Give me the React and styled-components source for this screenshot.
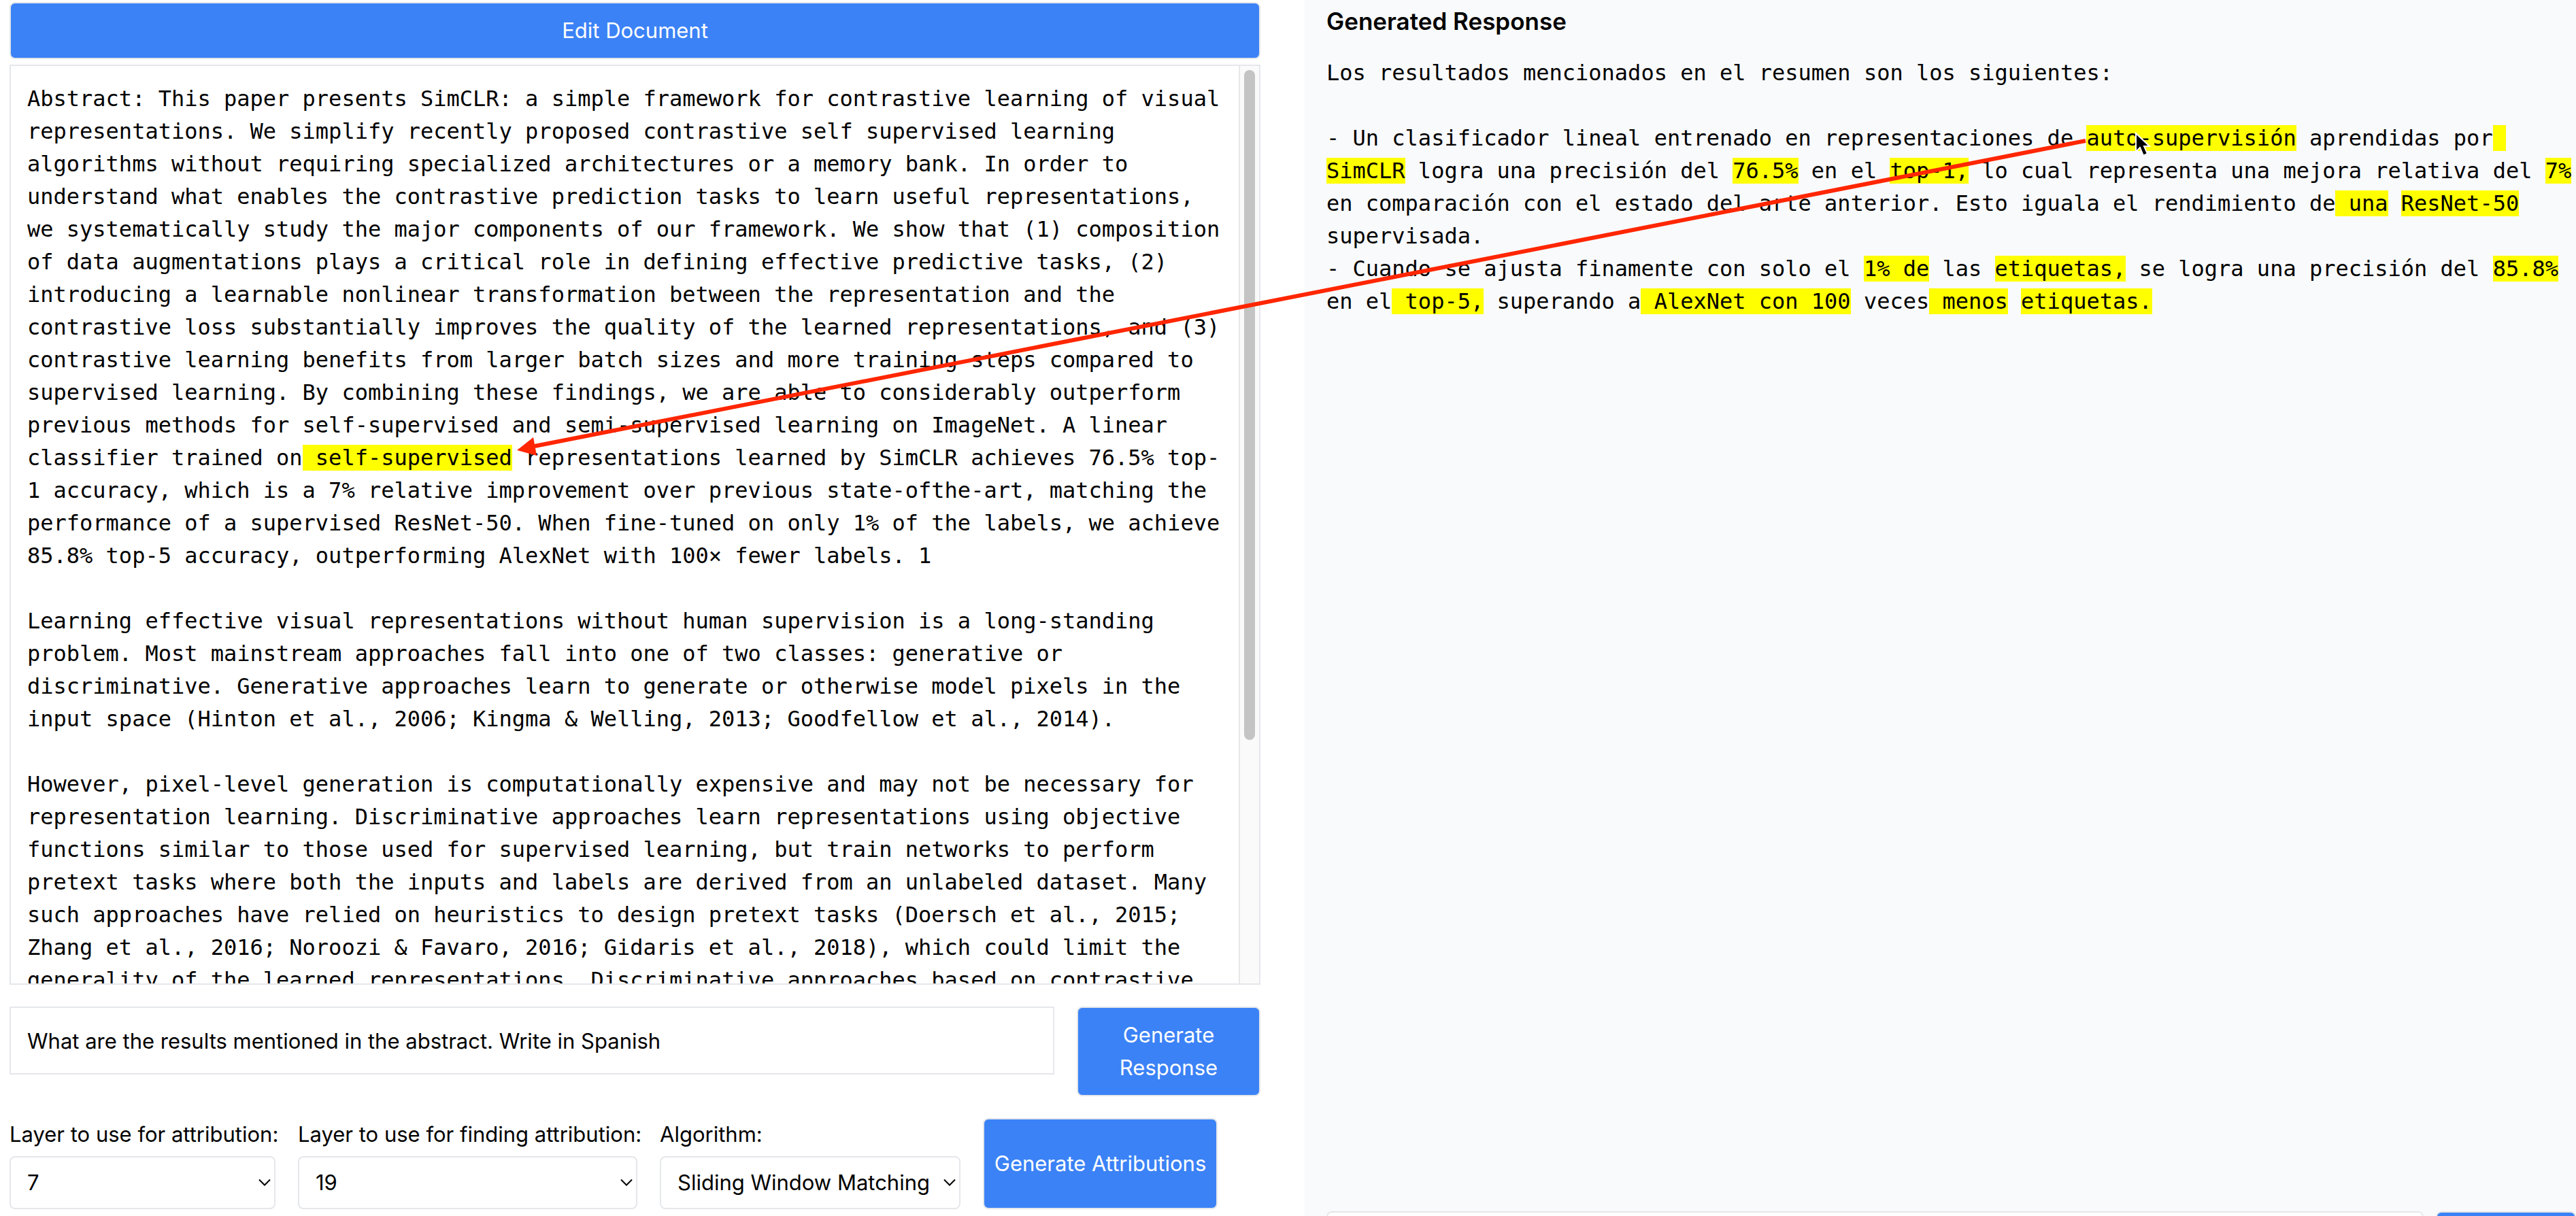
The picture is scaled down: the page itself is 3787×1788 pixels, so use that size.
import React from "react";
import styled, { createGlobalStyle } from "styled-components";

const sans = `Inter, "Liberation Sans", sans-serif`;
const mono = `"DejaVu Sans Mono", "Liberation Mono", monospace`;
const line = "#e5e7eb";
const blue = "#3b82f6";

const GlobalStyle = createGlobalStyle`
  *, *::before, *::after { box-sizing: border-box; }
  body {
    margin: 0;
    overflow: hidden;
    background: #fff;
    color: #000;
    font-family: ${sans};
    font-size: 31px;
    line-height: 48px;
  }
  button, input, select { font: inherit; color: inherit; margin: 0; }
`;

const Page = styled.div`
  position: relative;
  display: grid;
  grid-template-columns: 1918fr 1869fr;
  grid-template-rows: minmax(0, 1fr);
  height: 100vh;
  overflow: hidden;
`;

const Workspace = styled.main`
  display: flex;
  flex-direction: column;
  gap: 32px;
  min-width: 0;
  min-height: 0;
  padding: 3px 65px 10px 14px;
`;

const DocumentSection = styled.section`
  flex: 1;
  display: flex;
  flex-direction: column;
  gap: 8px;
  min-height: 0;
`;

const Button = styled.button`
  flex: ${(p) => p.$basis || "none"};
  padding: 16px 12px;
  border: 2px solid ${line};
  border-radius: 8px;
  background: ${blue};
  color: #fff;
  text-align: center;
`;

const DocumentBox = styled.div`
  flex: 1;
  display: flex;
  min-height: 0;
  border: 2px solid ${line};
  overflow: hidden;
`;

const DocumentText = styled.div`
  flex: 1;
  padding: 24px;
  font-family: ${mono};
  font-size: 32px;
  white-space: pre-wrap;
`;

const ScrollTrack = styled.div`
  flex: none;
  width: 30px;
  padding: 6px;
  border-left: 2px solid #e8e8e8;
  background: #fafafa;
`;

const ScrollThumb = styled.div`
  height: 73.7%;
  border-radius: 8px;
  background: #c4c4c4;
`;

const PromptRow = styled.form`
  display: flex;
  align-items: flex-start;
  gap: 33px;
`;

const PromptInput = styled.input`
  flex: 1;
  min-width: 0;
  height: 100px;
  padding: 0 24px;
  border: 2px solid ${line};
  background: #fff;
`;

const SettingsRow = styled.div`
  display: flex;
  align-items: stretch;
  gap: 33px;
`;

const Field = styled.label`
  display: flex;
  flex-direction: column;
  gap: 8px;
  width: ${(p) => p.$width}px;
  white-space: nowrap;
`;

const SelectWrap = styled.span`
  position: relative;
  display: block;
`;

const Select = styled.select`
  appearance: none;
  display: block;
  width: 100%;
  height: 78px;
  padding: 0 24px;
  border: 2px solid ${line};
  border-radius: 8px;
  background: #fff;
`;

const Chevron = styled.svg`
  position: absolute;
  right: 7px;
  top: 50%;
  width: 18px;
  height: 12px;
  margin-top: -6px;
  pointer-events: none;
`;

const ResponsePanel = styled.aside`
  min-width: 0;
  padding: 3px 0 0 32px;
  background: #f9fafc;
`;

const ResponseBody = styled.section`
  height: calc(100vh - 10px);
`;

const Heading = styled.h2`
  margin: 0 0 24px;
  font-size: 35px;
  font-weight: 600;
  line-height: 56px;
`;

const ResponseText = styled.div`
  font-family: ${mono};
  font-size: 32px;
  white-space: pre-wrap;
`;

const Mark = styled.mark`
  background: #ff0;
  color: inherit;
`;

const ReplyRow = styled.form`
  display: flex;
  gap: 18px;
`;

const ReplyInput = styled.input`
  flex: 1;
  min-width: 0;
  height: 84px;
  padding: 0 24px;
  border: 2px solid ${line};
  border-radius: 8px;
  background: #fff;
`;

const Annotation = styled.svg`
  position: absolute;
  inset: 0;
  width: 100%;
  height: 100%;
  pointer-events: none;
`;

function SelectField({ label, value, width }) {
  return (
    <Field $width={width}>
      {label}
      <SelectWrap>
        <Select defaultValue={value}>
          <option>{value}</option>
        </Select>
        <Chevron viewBox="0 0 18 12" fill="none" stroke="#000" strokeWidth="2">
          <path d="M1 1.5 L9 9.5 L17 1.5" />
        </Chevron>
      </SelectWrap>
    </Field>
  );
}

export default function App() {
  return (
    <>
      <GlobalStyle />
      <Page>
        <Workspace>
          <DocumentSection>
            <Button type="button">Edit Document</Button>
            <DocumentBox>
              <DocumentText>
                {"Abstract: This paper presents SimCLR: a simple framework for contrastive learning of visual representations. We simplify recently proposed contrastive self supervised learning algorithms without requiring specialized architectures or a memory bank. In order to understand what enables the contrastive prediction tasks to learn useful representations, we systematically study the major components of our framework. We show that (1) composition of data augmentations plays a critical role in defining effective predictive tasks, (2) introducing a learnable nonlinear transformation between the representation and the contrastive loss substantially improves the quality of the learned representations, and (3) contrastive learning benefits from larger batch sizes and more training steps compared to supervised learning. By combining these findings, we are able to considerably outperform previous methods for self-supervised and semi-supervised learning on ImageNet. A linear classifier trained on"}
                <Mark>{" self-supervised"}</Mark>
                {" representations learned by SimCLR achieves 76.5% top-"}
                <wbr />
                {"1 accuracy, which is a 7% relative improvement over previous state-ofthe-art, matching the performance of a supervised ResNet-50. When fine-tuned on only 1% of the labels, we achieve 85.8% top-5 accuracy, outperforming AlexNet with 100× fewer labels. 1\n\n"}
                {"Learning effective visual representations without human supervision is a long-standing problem. Most mainstream approaches fall into one of two classes: generative or discriminative. Generative approaches learn to generate or otherwise model pixels in the input space (Hinton et al., 2006; Kingma & Welling, 2013; Goodfellow et al., 2014).\n\n"}
                {"However, pixel-level generation is computationally expensive and may not be necessary for representation learning. Discriminative approaches learn representations using objective functions similar to those used for supervised learning, but train networks to perform pretext tasks where both the inputs and labels are derived from an unlabeled dataset. Many such approaches have relied on heuristics to design pretext tasks (Doersch et al., 2015; Zhang et al., 2016; Noroozi & Favaro, 2016; Gidaris et al., 2018), which could limit the generality of the learned representations. Discriminative approaches based on contrastive"}
              </DocumentText>
              <ScrollTrack>
                <ScrollThumb />
              </ScrollTrack>
            </DocumentBox>
          </DocumentSection>

          <PromptRow onSubmit={(e) => e.preventDefault()}>
            <PromptInput
              aria-label="Prompt"
              defaultValue="What are the results mentioned in the abstract. Write in Spanish"
            />
            <Button $basis="0 0 270px">Generate Response</Button>
          </PromptRow>

          <SettingsRow>
            <SelectField label="Layer to use for attribution:" value="7" width={391} />
            <SelectField label="Layer to use for finding attribution:" value="19" width={499} />
            <SelectField label="Algorithm:" value="Sliding Window Matching" width={442} />
            <Button type="button" $basis="0 0 345px">Generate Attributions</Button>
          </SettingsRow>
        </Workspace>

        <ResponsePanel>
          <ResponseBody>
            <Heading>Generated Response</Heading>
            <ResponseText>
              {"Los resultados mencionados en el resumen son los siguientes:\n\n- Un clasificador lineal entrenado en representaciones de "}
              <Mark>auto-supervisión</Mark>
              {" aprendidas por"}
              <Mark>{" SimCLR"}</Mark>
              {" logra una precisión del "}
              <Mark>76.5%</Mark>
              {" en el "}
              <Mark>top-1,</Mark>
              {" lo cual representa una mejora relativa del "}
              <Mark>7%</Mark>
              {" en comparación con el estado del arte anterior. Esto iguala el rendimiento de"}
              <Mark>{" una"}</Mark>
              {" "}
              <Mark>ResNet-50</Mark>
              {" supervisada.\n- Cuando se ajusta finamente con solo el "}
              <Mark>1% de</Mark>
              {" las "}
              <Mark>etiquetas,</Mark>
              {" se logra una precisión del "}
              <Mark>85.8%</Mark>
              {" en el"}
              <Mark>{" top-5,"}</Mark>
              {" superando a"}
              <Mark>{" AlexNet con 100"}</Mark>
              {" veces"}
              <Mark>{" menos"}</Mark>
              {" "}
              <Mark>etiquetas.</Mark>
            </ResponseText>
          </ResponseBody>
          <ReplyRow onSubmit={(e) => e.preventDefault()}>
            <ReplyInput aria-label="Reply" />
            <Button $basis="0 0 206px" aria-label="Send" />
          </ReplyRow>
        </ResponsePanel>

        <Annotation>
          <path d="M3066 207 L786 656" stroke="#ff2600" strokeWidth="6" />
          <path d="M760 662 L784 643 L789 670 Z" fill="#ff2600" />
          <path
            d="M3140 196 V223 L3146 217 L3151 229 L3157 226 L3152 215 H3160 Z"
            fill="#000"
            stroke="#fff"
            strokeWidth="2"
          />
        </Annotation>
      </Page>
    </>
  );
}
